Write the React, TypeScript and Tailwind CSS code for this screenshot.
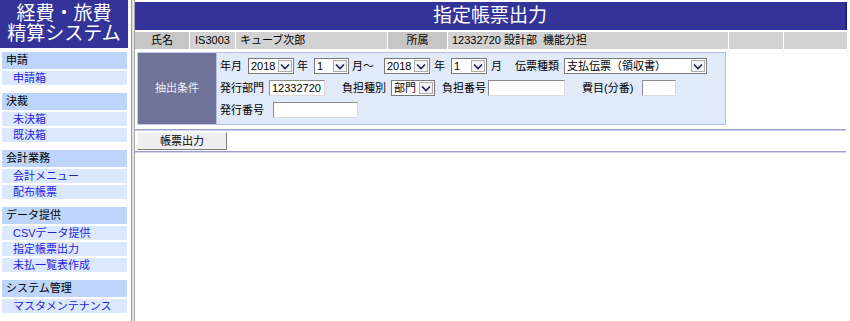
import { ReactNode } from 'react';

const menu = [
  { title: '申請', items: ['申請箱'] },
  { title: '決裁', items: ['未決箱', '既決箱'] },
  { title: '会計業務', items: ['会計メニュー', '配布帳票'] },
  { title: 'データ提供', items: ['CSVデータ提供', '指定帳票出力', '未払一覧表作成'] },
  { title: 'システム管理', items: ['マスタメンテナンス'] },
];

function Chevron() {
  return (
    <svg width="10" height="7" viewBox="0 0 10 7">
      <path d="M1 1.5 L5 5.5 L9 1.5" fill="none" stroke="#1b2450" strokeWidth="1.6" />
    </svg>
  );
}

function Select({ value, width, className = '' }: { value: string; width: string; className?: string }) {
  return (
    <div className={`flex h-[16px] shrink-0 items-stretch border border-[#7a7a7a] bg-white ${width} ${className}`}>
      <span className="flex-1 overflow-hidden whitespace-nowrap pl-[2px] leading-[14px]">{value}</span>
      <span className="my-[1px] mr-[1px] flex w-[14px] items-center justify-center border border-[#adadad] bg-[#f3f3f3]">
        <Chevron />
      </span>
    </div>
  );
}

function Input({ value = '', width, className = '' }: { value?: string; width: string; className?: string }) {
  return (
    <div
      className={`h-[16px] shrink-0 border border-[#8c8c8c] border-b-[#dcdcdc] border-r-[#dcdcdc] bg-white pl-[2px] leading-[14px] ${width} ${className}`}
    >
      {value}
    </div>
  );
}

function Label({ children, className = '' }: { children: ReactNode; className?: string }) {
  return <span className={`shrink-0 whitespace-nowrap leading-[16px] ${className}`}>{children}</span>;
}

export default function App() {
  return (
    <div className="flex h-[321px] w-[850px] overflow-hidden bg-white text-[11px] text-black [font-family:'Liberation_Sans','Noto_Sans_CJK_JP',sans-serif]">
      {/* Sidebar */}
      <aside className="flex w-[128px] flex-col">
        <div className="flex h-[48px] flex-col items-center justify-center bg-[#333399] text-[19px] leading-[20px] text-white">
          <span>経費・旅費</span>
          <span>精算システム</span>
        </div>
        <nav className="mt-[4px] pl-[2px] pr-[1px]">
          {menu.map((group) => (
            <div key={group.title} className="mb-[8px]">
              <div className="h-[17px] bg-[#bdd5fb] pl-[4px] leading-[17px]">{group.title}</div>
              {group.items.map((item) => (
                <div key={item} className="mt-[2px] h-[14px] bg-[#dce8fd] pl-[11px] leading-[14px] text-[#1f1fdc]">
                  {item}
                </div>
              ))}
            </div>
          ))}
        </nav>
      </aside>

      {/* Frame splitter */}
      <div className="flex w-[7px]">
        <div className="ml-[3px] w-[1px] bg-[#9a9a9a]" />
        <div className="w-[2px] bg-[#e2e2e2]" />
        <div className="w-[1px] bg-[#a6a6a6]" />
      </div>

      {/* Main */}
      <main className="flex w-[715px] flex-col pt-[2px]">
        <div className="flex h-[28px] w-[712px] items-center justify-center border-r-[2px] border-[#1c1c8c] bg-[#333399] text-[19px] text-white">
          指定帳票出力
        </div>

        <div className="mt-[2px] flex h-[17px] w-[712px] leading-[17px]">
          <div className="w-[55px] border-r border-white bg-[#c6c6c6] text-center">氏名</div>
          <div className="w-[46px] border-r border-white bg-[#d2d2d2] text-center">IS3003</div>
          <div className="w-[152px] border-r border-white bg-[#d2d2d2] pl-[4px]">キューブ次郎</div>
          <div className="w-[60px] border-r border-white bg-[#c6c6c6] text-center">所属</div>
          <div className="w-[281px] border-r border-white bg-[#d2d2d2] pl-[4px]">12332720 設計部&nbsp; 機能分担</div>
          <div className="w-[55px] border-r border-white bg-[#d2d2d2]" />
          <div className="flex-1 bg-[#d2d2d2]" />
        </div>

        {/* 抽出条件 */}
        <div className="ml-[2px] mt-[3px] flex h-[73px] w-[589px]">
          <div className="flex w-[79px] items-center justify-center border border-r-0 border-[#c4cdee] bg-[#6f7398] text-[#eef0f8]">
            抽出条件
          </div>
          <div className="flex flex-1 flex-col gap-[6px] border border-[#b4c0ea] bg-[#e1eaf9] pl-[3px] pt-[5px]">
            <div className="flex items-center">
              <Label className="w-[22px]">年月</Label>
              <Select value="2018" width="w-[46px]" className="ml-[6px]" />
              <Label className="ml-[3px] w-[11px]">年</Label>
              <Select value="1" width="w-[35px]" className="ml-[6px]" />
              <Label className="ml-[3px] w-[22px]">月～</Label>
              <Select value="2018" width="w-[46px]" className="ml-[10px]" />
              <Label className="ml-[4px] w-[11px]">年</Label>
              <Select value="1" width="w-[36px]" className="ml-[6px]" />
              <Label className="ml-[4px] w-[11px]">月</Label>
              <Label className="ml-[13px] w-[44px]">伝票種類</Label>
              <Select value="支払伝票（領収書）" width="w-[143px]" className="ml-[5px]" />
            </div>
            <div className="flex items-center">
              <Label className="w-[44px]">発行部門</Label>
              <Input value="12332720" width="w-[56px]" className="ml-[5px]" />
              <Label className="ml-[17px] w-[44px]">負担種別</Label>
              <Select value="部門" width="w-[44px]" className="ml-[5px]" />
              <Label className="ml-[7px] w-[44px]">負担番号</Label>
              <Input width="w-[77px]" className="ml-[2px]" />
              <Label className="ml-[17px] w-[56px]">費目(分番)</Label>
              <Input width="w-[34px]" className="ml-[4px]" />
            </div>
            <div className="flex items-center">
              <Label className="w-[44px]">発行番号</Label>
              <Input width="w-[85px]" className="ml-[9px]" />
            </div>
          </div>
        </div>

        <div className="mt-[4px] flex w-[711px] flex-col">
          <div className="h-[1px] bg-[#9c9cd4]" />
          <div className="h-[1px] bg-[#d2d2f0]" />
        </div>
        <div className="flex h-[20px] items-start">
          <button className="ml-[2px] mt-[1px] h-[18px] w-[90px] border border-[#f8f8f8] border-b-[#7c7c7c] border-r-[#7c7c7c] bg-[#efefef] text-[11px] leading-[16px]">
            帳票出力
          </button>
        </div>
        <div className="flex w-[711px] flex-col">
          <div className="h-[1px] bg-[#9c9cd4]" />
          <div className="h-[1px] bg-[#d2d2f0]" />
        </div>
      </main>
    </div>
  );
}
